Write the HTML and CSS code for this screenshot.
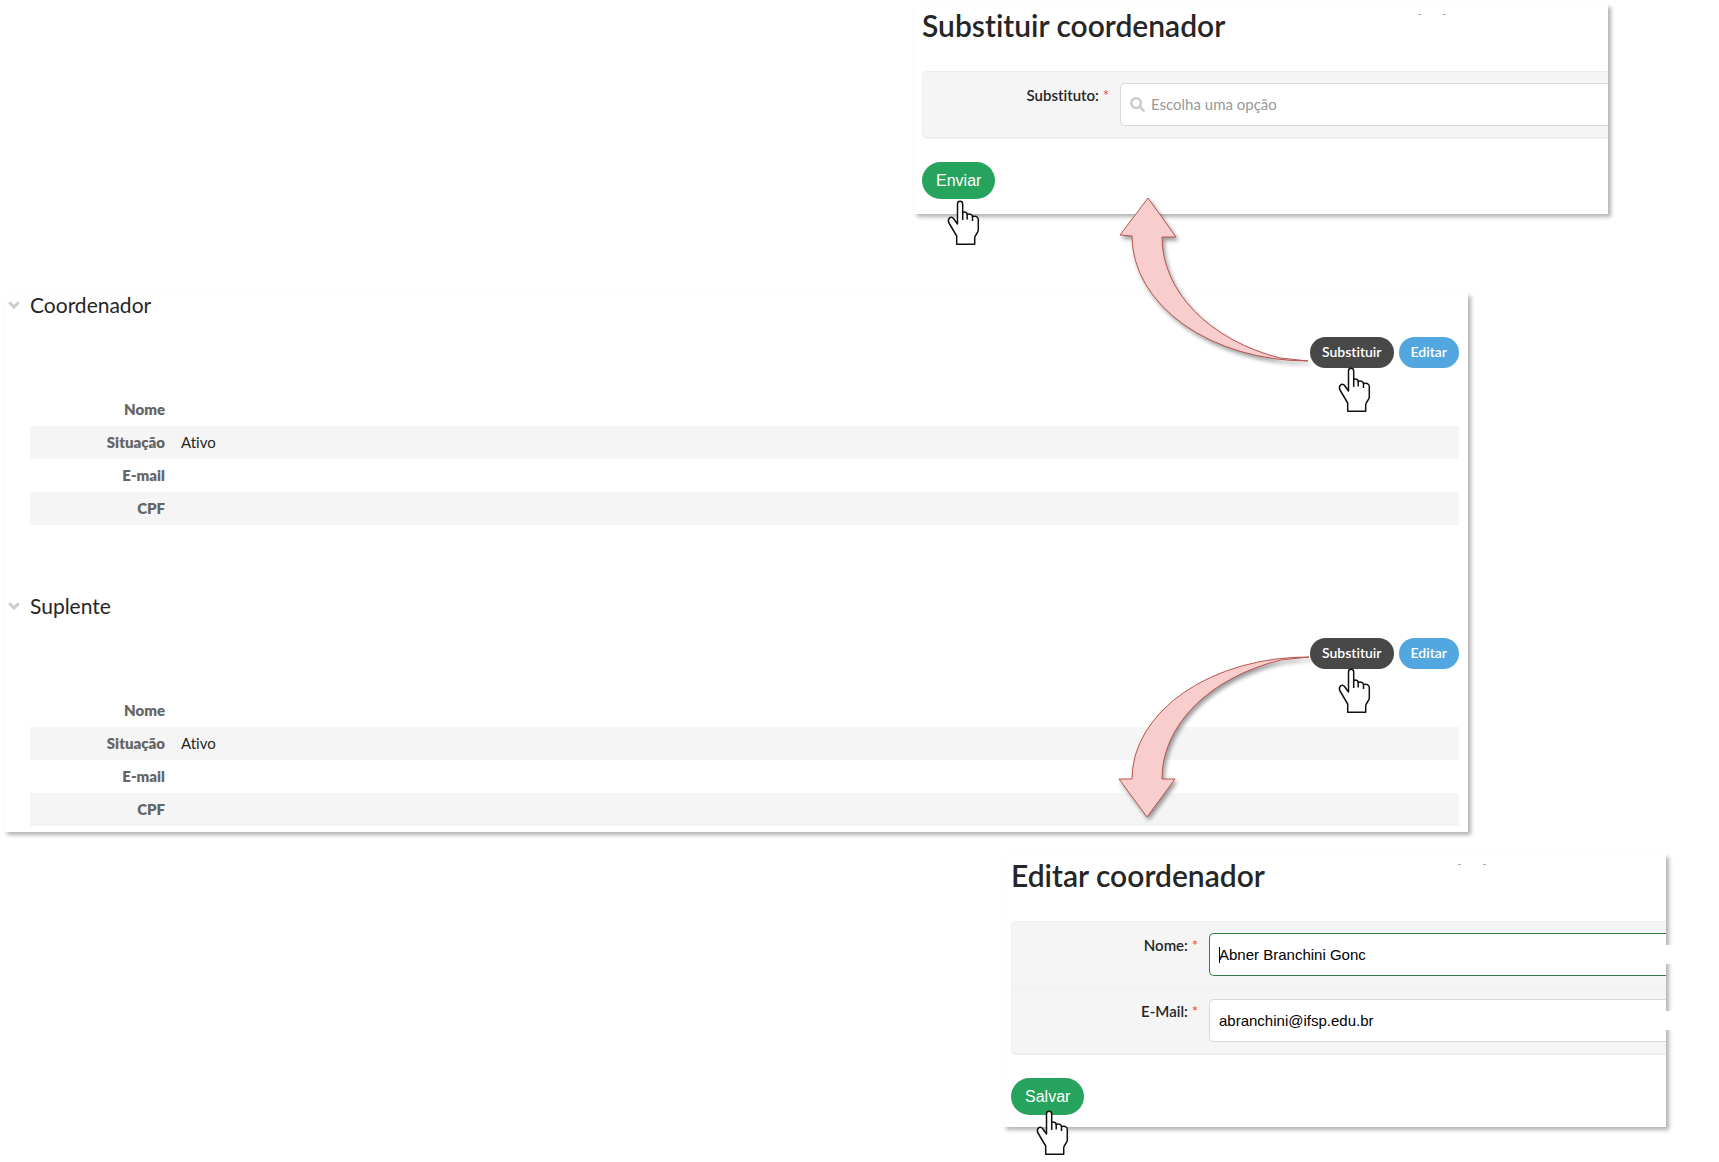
FILE: index.html
```
<!DOCTYPE html>
<html lang="pt-br">
<head>
    <meta charset="utf-8">
    <title>Coordenador e suplente</title>
    <link rel="stylesheet" href="styles.css">
</head>
<body>
    <!-- Shared shape: pointing hand -->
    <svg class="defs" width="0" height="0" aria-hidden="true">
        <symbol id="hand" viewBox="0 0 36 48">
            <path d="M12.500 25V5c0-3.600 5.200-3.600 5.200 0v8.500c1.500-.8 4-.5 4.500 1.500v.6c1.600-1 4.900-.5 5.300 1.500v.6c2-1 5.800-.4 5.800 2.800v10.500c0 3-3.600 5-3.600 8v6.300H11.700V37L4 24c-2-4 1.800-7.800 4.500-4.500z"/>
            <path d="M17.700 13v8M22.200 15v5.500M27.500 17v5"/>
        </symbol>
    </svg>

    <main class="board">
        <section class="panel panel-replace">
            <h1>Substituir coordenador</h1>
            <span class="speck speck-a"></span>
            <span class="speck speck-b"></span>
            <form>
                <div class="fields">
                    <div class="field">
                        <label for="substituto">Substituto: <span class="required">*</span></label>
                        <div class="control">
                            <svg class="search" viewBox="0 0 14 14" aria-hidden="true">
                                <circle cx="5.700" cy="5.700" r="4.500"/>
                                <path d="M9.200 9.200l3.500 3.500"/>
                            </svg>
                            <input type="text" id="substituto" class="autocomplete" placeholder="Escolha uma opção">
                        </div>
                    </div>
                </div>
                <div class="submit">
                    <button type="button" class="button-send">Enviar</button>
                    <svg class="hand hand-below"><use href="#hand"/></svg>
                </div>
            </form>
        </section>

        <section class="panel panel-list">
            <div class="group">
                <h2>
                    <svg class="chevron" viewBox="0 0 12 8" aria-hidden="true"><path d="M1.200 1.200L6 6l4.800-4.800"/></svg>
                    Coordenador
                </h2>
                <div class="actions">
                    <a href="#" class="button button-dark">Substituir</a>
                    <a href="#" class="button button-blue">Editar</a>
                    <svg class="hand hand-action"><use href="#hand"/></svg>
                    <svg class="arrow arrow-up" viewBox="0 0 205 185" aria-hidden="true">
                        <path d="M38 8L66 47H52A176 128 0 0 0 170 168L198 171A176 125 0 0 1 22 46L10 45Z"/>
                    </svg>
                </div>
                <table>
                    <tr><th scope="row">Nome</th><td></td></tr>
                    <tr><th scope="row">Situação</th><td>Ativo</td></tr>
                    <tr><th scope="row">E-mail</th><td></td></tr>
                    <tr><th scope="row">CPF</th><td></td></tr>
                </table>
            </div>

            <div class="group">
                <h2>
                    <svg class="chevron" viewBox="0 0 12 8" aria-hidden="true"><path d="M1.200 1.200L6 6l4.800-4.800"/></svg>
                    Suplente
                </h2>
                <div class="actions">
                    <a href="#" class="button button-dark">Substituir</a>
                    <a href="#" class="button button-blue">Editar</a>
                    <svg class="hand hand-action"><use href="#hand"/></svg>
                    <svg class="arrow arrow-down" viewBox="0 0 205 185" aria-hidden="true">
                        <path d="M37 172L65 134H52A176 125 0 0 1 171 15L199 12A176 122 0 0 0 22 134H9Z"/>
                    </svg>
                </div>
                <table>
                    <tr><th scope="row">Nome</th><td></td></tr>
                    <tr><th scope="row">Situação</th><td>Ativo</td></tr>
                    <tr><th scope="row">E-mail</th><td></td></tr>
                    <tr><th scope="row">CPF</th><td></td></tr>
                </table>
            </div>
        </section>

        <section class="panel panel-edit">
            <h1>Editar coordenador</h1>
            <span class="speck speck-a"></span>
            <span class="speck speck-b"></span>
            <form>
                <div class="fields">
                    <div class="field">
                        <label for="nome">Nome: <span class="required">*</span></label>
                        <div class="control control-active control-open">
                            <input type="text" id="nome" value="Abner Branchini Gonc">
                            <span class="caret"></span>
                        </div>
                    </div>
                    <div class="field">
                        <label for="email">E-Mail: <span class="required">*</span></label>
                        <div class="control control-open">
                            <input type="text" id="email" value="abranchini@ifsp.edu.br">
                        </div>
                    </div>
                </div>
                <div class="submit">
                    <button type="button" class="button-send">Salvar</button>
                    <svg class="hand"><use href="#hand"/></svg>
                </div>
            </form>
        </section>
    </main>
</body>
</html>
```
FILE: styles.css
```
* {
    box-sizing: border-box;
}

body {
    margin: 0;
    background-color: #fff;
    color: #262626;
    font-family: Lato, "Open Sans", sans-serif;
    font-size: 15px;
    font-variant-ligatures: none;
}

.defs {
    position: absolute;
}

/* The three panels start and end on shared column lines */
.board {
    display: grid;
    grid-template-columns: 4fr 910fr 89fr 465fr 140fr 58fr 53fr;
    padding: 4px 0 32px;
}

.panel {
    position: relative;
    background-color: #fff;
    box-shadow: 3px 3px 4px rgba(0, 0, 0, 0.3);
}

.panel-replace {
    grid-column: 3 / 6;
    padding: 0 0 15px 8px;
}

.panel-list {
    grid-column: 2 / 5;
    margin: 79px 0 22px;
    padding: 0 9px 6px 4px;
}

.panel-edit {
    grid-column: 4 / 7;
    padding: 0 0 12px 8px;
}

h1 {
    margin: 0;
    padding: 1px 0 26px;
    font-size: 30px;
    font-weight: 600;
    line-height: 40px;
}

/* Forms */
.fields {
    border: 1px solid #eee;
    border-right: none;
    border-bottom-width: 2px;
    border-radius: 5px 0 0 5px;
    background-color: #f5f5f5;
}

.field {
    display: flex;
    gap: 11px;
    padding: 11px 0;
}

.field + .field {
    border-top: 1px solid #eee;
}

.field label {
    width: 186px;
    padding-top: 2px;
    font-weight: 600;
    line-height: 20px;
    text-align: right;
}

.required {
    color: #e74c3c;
    font-weight: 400;
}

.control {
    position: relative;
    display: flex;
    flex: 1;
    align-items: center;
    gap: 6px;
    height: 43px;
    padding-left: 9px;
    border: 1px solid #d9d9d9;
    border-right: none;
    border-radius: 5px 0 0 5px;
    background-color: #fff;
}

.control-active {
    border-color: #2e7d42;
}

.control-open::after {
    content: "";
    position: absolute;
    top: 11px;
    right: -10px;
    width: 10px;
    height: 19px;
    background-color: #fff;
}

.control input {
    flex: 1;
    min-width: 0;
    padding: 0;
    border: none;
    outline: none;
    background: none;
    color: #000;
    font-family: "Liberation Sans", Arial, sans-serif;
    font-size: 15px;
}

.control .autocomplete {
    padding-bottom: 2px;
    font-family: Lato, "Open Sans", sans-serif;
}

.control input::placeholder {
    color: #999;
}

.caret {
    position: absolute;
    top: 13px;
    left: 9px;
    width: 1px;
    height: 16px;
    background-color: #000;
}

.search {
    width: 15px;
    height: 15px;
    fill: none;
    stroke: #ccc;
    stroke-width: 2.400;
    stroke-linecap: round;
}

.submit {
    position: relative;
    margin-top: 23px;
}

.button-send {
    display: block;
    height: 37px;
    padding: 0 14px;
    border: none;
    border-radius: 19px;
    background-color: #26a35c;
    color: #fff;
    font-family: "Liberation Sans", Arial, sans-serif;
    font-size: 16px;
    cursor: pointer;
}

/* Coordenador / Suplente */
.group + .group {
    margin-top: 69px;
}

h2 {
    display: flex;
    align-items: center;
    gap: 10px;
    margin: 0 0 20px;
    font-size: 21px;
    font-weight: 400;
    line-height: 24px;
}

.chevron {
    width: 12px;
    height: 8px;
    fill: none;
    stroke: #ccc;
    stroke-width: 3;
}

.actions {
    position: relative;
    display: flex;
    justify-content: flex-end;
    gap: 5px;
    margin-bottom: 25px;
}

.button {
    padding: 0 12px 1px;
    border-radius: 16px;
    color: #fff;
    font-size: 14px;
    font-weight: 600;
    line-height: 30px;
    text-decoration: none;
}

.button-dark {
    background-color: #484848;
}

.button-blue {
    background-color: #52a7e0;
}

table {
    width: calc(100% - 22px);
    margin-left: 22px;
    border-collapse: collapse;
}

tr:nth-child(even) {
    background-color: #f5f5f5;
}

th,
td {
    height: 33px;
    padding: 0 0 2px;
    line-height: 20px;
}

th {
    width: 135px;
    color: #666;
    font-weight: 800;
    text-align: right;
}

td {
    padding-left: 16px;
}

/* Hands and arrows lie over the panels */
.hand {
    position: absolute;
    top: 31px;
    left: 23px;
    z-index: 2;
    width: 36px;
    height: 48px;
    fill: #fff;
    stroke: #111;
    stroke-width: 1.500;
    stroke-linejoin: round;
}

.hand-below {
    top: 37px;
}

.hand-action {
    top: 29px;
    right: 87px;
    left: auto;
}

.arrow {
    position: absolute;
    right: 144px;
    z-index: 1;
    width: 205px;
    height: 185px;
    fill: #f8cecc;
    stroke: #b85450;
    filter: drop-shadow(2px 3px 2px rgba(0, 0, 0, 0.4));
    pointer-events: none;
}

.arrow-up {
    top: -147px;
}

.arrow-down {
    top: 7px;
}

.speck {
    position: absolute;
    top: 10px;
    width: 3px;
    height: 1px;
    background-color: #aaa;
}

.speck-a {
    right: 187px;
}

.speck-b {
    right: 162px;
}

.panel-edit .speck-a {
    right: 205px;
}

.panel-edit .speck-b {
    right: 180px;
}
```
